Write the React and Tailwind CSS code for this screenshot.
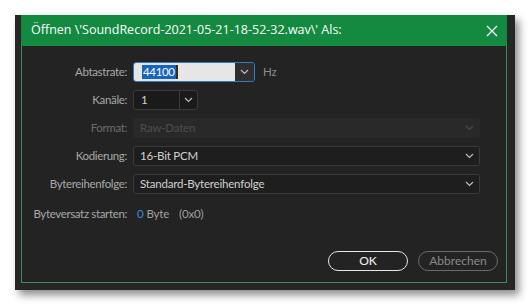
import React from "react";

const font = { fontFamily: 'Lato, "Open Sans", sans-serif' };
const titleFont = { fontFamily: '"Open Sans", "Noto Sans", sans-serif' };

function Chevron({ color = "#bdbdbd" }) {
  return (
    <svg width="9" height="6" viewBox="0 0 9 6" fill="none">
      <path d="M1 1l3.5 3.5L8 1" stroke={color} strokeWidth="1.2" />
    </svg>
  );
}

function Row({ label, children, dim }) {
  return (
    <div className="flex items-center h-[20px]">
      <div
        className={`w-[106px] shrink-0 text-right pr-[1px] ${
          dim ? "text-[#6c6c6c]" : "text-[#a8a8a8]"
        }`}
      >
        {label}
      </div>
      <div className="ml-[5px] flex items-center h-full tracking-[-0.2px]">{children}</div>
    </div>
  );
}

export default function App() {
  return (
    <div
      className="w-[531px] h-[306px] bg-white relative text-[11.5px] tracking-[-0.35px]"
      style={font}
    >
      <div className="absolute left-[15px] top-[15px] w-[500px] h-[275px] bg-[#262626] pl-[6px] pr-[8px] pb-[7px] flex flex-col shadow-[4px_5px_8px_rgba(0,0,0,0.45)]">
        {/* title bar */}
        <div className="h-[31px] bg-[#138a3f] flex items-center justify-between pl-[10px] pr-[9px] shrink-0">
          <span className="text-white text-[12.5px] tracking-normal" style={titleFont}>
            Öffnen \'SoundRecord-2021-05-21-18-52-32.wav\' Als:
          </span>
          <svg width="12" height="12" viewBox="0 0 12 12">
            <path d="M1 1l10 10M11 1L1 11" stroke="#fff" strokeWidth="1.3" />
          </svg>
        </div>
        {/* body */}
        <div className="flex-1 bg-[#232323] border border-t-0 border-[#3f8a58] flex flex-col pt-[16px]">
          <div className="flex flex-col gap-[8px]">
            <Row label="Abtastrate:">
              <div className="flex h-[20px] w-[122px] rounded-[3px] border border-[#3a79c4] overflow-hidden tracking-[-0.35px]">
                <div className="flex-1 bg-[#e6e6e6] flex items-center pl-[8px]">
                  <span className="bg-[#1565c0] text-white leading-[14px] px-[1px]">44100</span>
                  <span className="w-[2px] h-[14px] bg-[#3b2a10]" />
                </div>
                <div className="w-[19px] bg-[#2e2e2e] flex items-center justify-center">
                  <Chevron />
                </div>
              </div>
              <span className="ml-[8px] text-[#8c8c8c]">Hz</span>
            </Row>
            <Row label="Kanäle:">
              <div className="flex h-[20px] w-[65px] rounded-[3px] border border-[#3a3a3a] bg-[#1a1a1a]">
                <div className="flex-1 flex items-center pl-[7px] text-[#d0d0d0] border-r border-[#3a3a3a]">
                  1
                </div>
                <div className="w-[17px] flex items-center justify-center">
                  <Chevron />
                </div>
              </div>
            </Row>
            <Row label="Format:" dim>
              <div className="flex items-center h-[20px] w-[347px] rounded-[3px] bg-[#292929] pl-[7px] pr-[6px] justify-between">
                <span className="text-[#4e4e4e]">Raw-Daten</span>
                <Chevron color="#4a4a4a" />
              </div>
            </Row>
            <Row label="Kodierung:">
              <div className="flex items-center h-[20px] w-[347px] rounded-[3px] bg-[#1e1e1e] border border-[#3a3a3a] pl-[6px] pr-[5px] justify-between">
                <span className="text-[#d0d0d0]">16-Bit PCM</span>
                <Chevron />
              </div>
            </Row>
            <Row label="Bytereihenfolge:">
              <div className="flex items-center h-[20px] w-[347px] rounded-[3px] bg-[#1e1e1e] border border-[#3a3a3a] pl-[6px] pr-[5px] justify-between">
                <span className="text-[#d0d0d0]">Standard-Bytereihenfolge</span>
                <Chevron />
              </div>
            </Row>
          </div>
          <div className="mt-[10px]">
            <Row label="Byteversatz starten:">
              <span className="ml-[4px] text-[#3d8fd8]">0</span>
              <span className="ml-[3px] text-[#a0a0a0]">Byte</span>
              <span className="ml-[10px] text-[#a0a0a0]">(0x0)</span>
            </Row>
          </div>
          <div className="mt-auto mb-[11px] flex justify-end gap-[10px] pr-[8px] text-[12px] tracking-normal">
            <button className="w-[80px] h-[20px] rounded-full border-[1.5px] border-[#e6e6e6] text-[#ececec] font-medium flex items-center justify-center">
              OK
            </button>
            <button className="w-[80px] h-[20px] rounded-full border-[1.5px] border-[#6a6a6a] text-[#8a8a8a] flex items-center justify-center">
              Abbrechen
            </button>
          </div>
        </div>
      </div>
    </div>
  );
}
